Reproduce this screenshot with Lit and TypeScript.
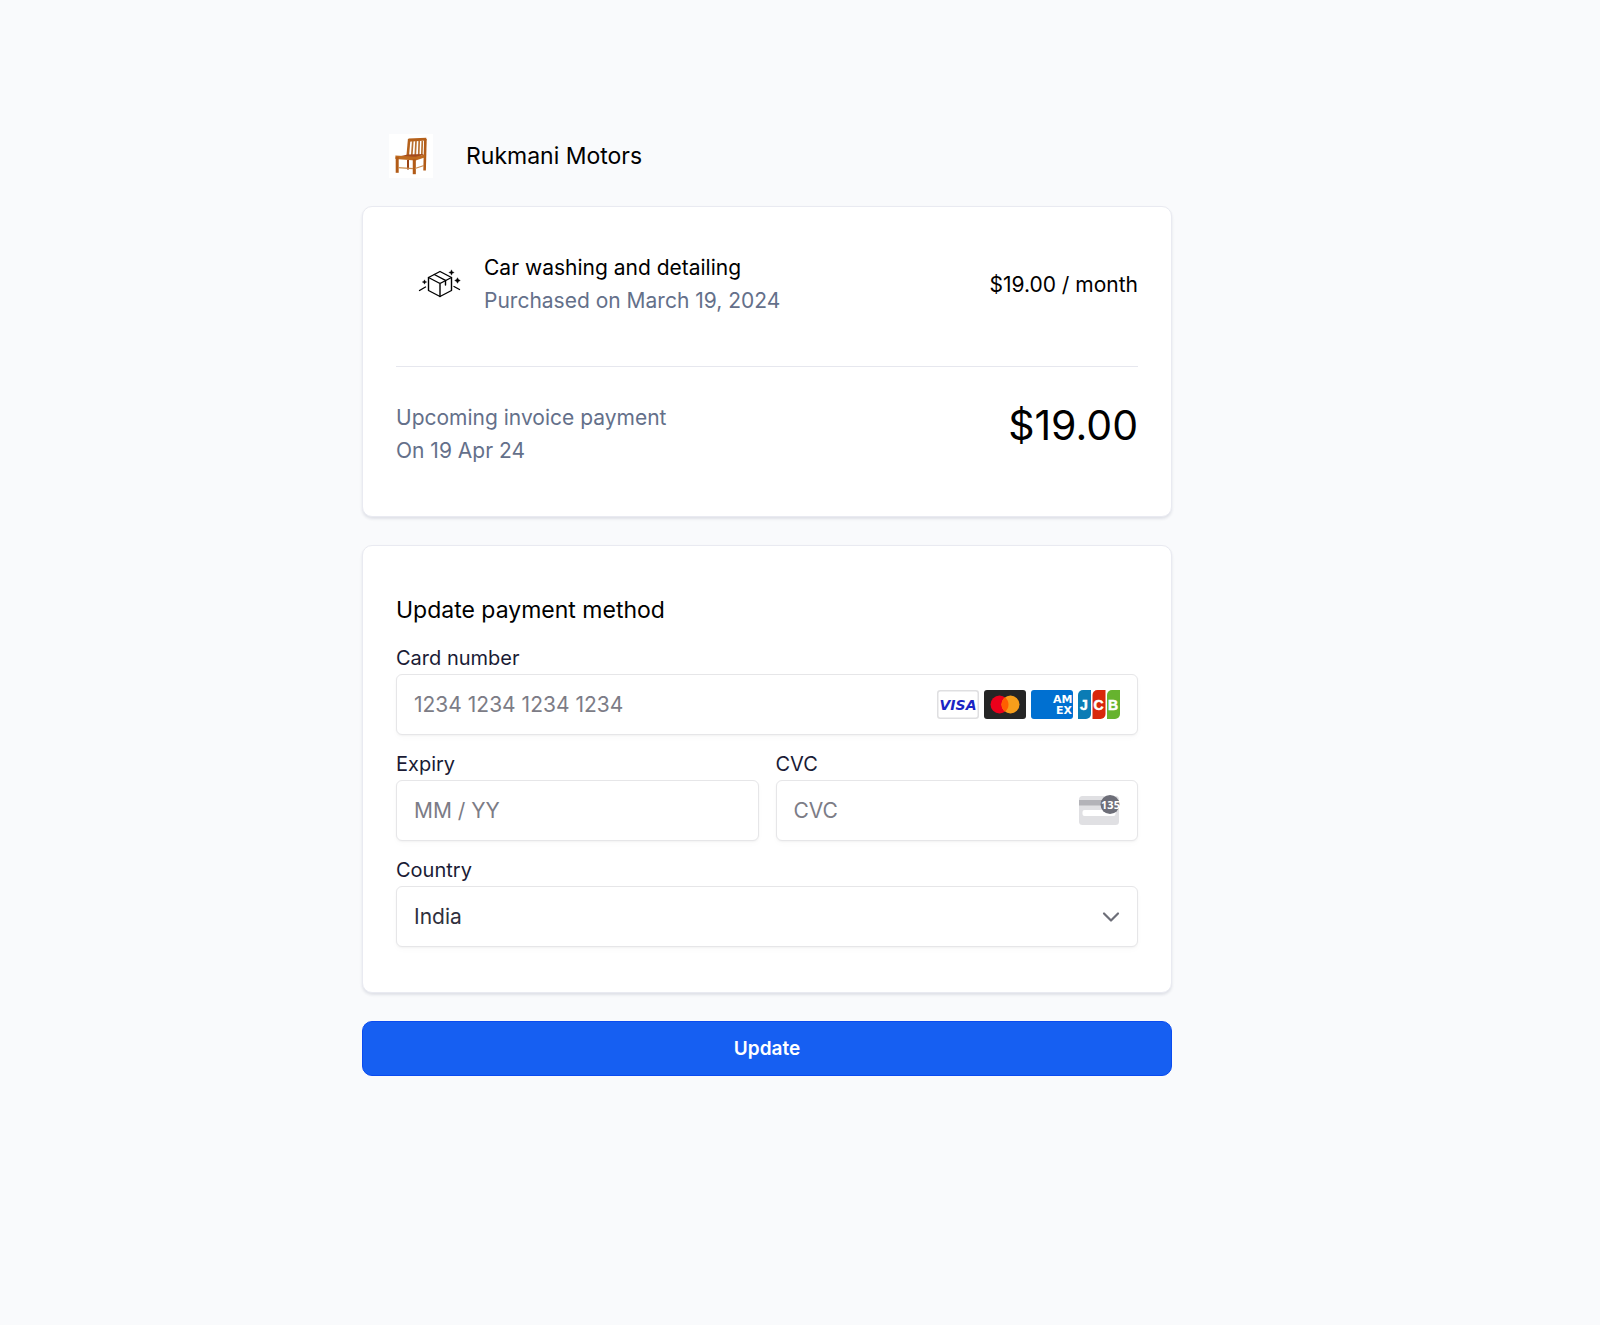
import { LitElement, html, css, svg } from "lit";
import { customElement } from "lit/decorators.js";

const chair = html`
  <svg class="logo" viewBox="0 0 44 44" role="img" aria-label="Wooden chair">
    <rect width="44" height="44" fill="#fff" />
    <path d="M19.5 4.6 L37.3 3.8 L37.4 6.6 L19.3 7.8 Z" fill="#b5611b" />
    <path d="M20.2 5 L18.8 21" stroke="#b5611b" stroke-width="2.6" />
    <path d="M36.4 5 L35.6 36.5" stroke="#b25b17" stroke-width="2.6" />
    <path d="M23.8 7 L22.8 21 M27 7 L26.3 21 M30.2 7 L29.7 21 M33.3 7 L32.8 21" stroke="#b8702f" stroke-width="1.7" />
    <path d="M18.6 20.4 L35 20 L26.5 24.8 L6.6 23.2 Z" fill="#a34a1c" />
    <path d="M6.4 21.4 L26.5 22.8 L35.6 20.5 L35.6 23.6 L26.6 26.6 L6.4 25 Z" fill="#bf6a1f" />
    <path d="M8.2 23 V38.8" stroke="#b25b17" stroke-width="3" />
    <path d="M25.3 25 V40.2" stroke="#b25b17" stroke-width="3.1" />
    <path d="M19 26 V35.5" stroke="#9a4315" stroke-width="2" />
    <path d="M9 33.6 L24 34.6 M26 34.5 L35 31.5" stroke="#c98a4e" stroke-width="1.2" />
  </svg>
`;

const parcel = html`
  <svg class="parcel" viewBox="0 0 44 30" aria-hidden="true">
    <g fill="none" stroke="#000" stroke-width="1.4" stroke-linejoin="round" stroke-linecap="round">
      <path d="M22 2.5 L33.5 8.5 V21.5 L22 27.5 L10.5 21.5 V8.5 Z" />
      <path d="M10.5 8.5 L22 14.5 L33.5 8.5 M22 14.5 V27.5" />
      <path d="M16.3 5.5 L27.5 11.4 V16" />
      <path d="M1.5 21.5 L7.5 18 M36 17.5 L41.5 20.5" />
    </g>
    <path d="M33.5 .8 l.8 1.9 1.9 .8 -1.9 .8 -.8 1.9 -.8 -1.9 -1.9 -.8 1.9 -.8z M6.5 10.8 l.7 1.5 1.5 .7 -1.5 .7 -.7 1.5 -.7 -1.5 -1.5 -.7 1.5 -.7z M39.5 8.7 l1 1.8 1.8 1 -1.8 1 -1 1.8 -1 -1.8 -1.8 -1 1.8 -1z" stroke="#000" stroke-width=".4" />
  </svg>
`;

const brands = [
  {
    name: "Visa",
    art: svg`
      <rect x=".75" y=".75" width="40.5" height="27.5" rx="2.5" fill="#fff" stroke="#dfdfe1" stroke-width="1.5" />
      <text x="21" y="20" text-anchor="middle" font-family="DejaVu Sans, sans-serif" font-size="14" font-weight="700" font-style="italic" fill="#1a25c4">VISA</text>`,
  },
  {
    name: "Mastercard",
    art: svg`
      <rect width="42" height="29" rx="3" fill="#252525" />
      <circle cx="15.5" cy="14.5" r="9" fill="#eb001b" />
      <circle cx="26.5" cy="14.5" r="9" fill="#f79e1b" />
      <path d="M21 7.37 a9 9 0 0 1 0 14.26 a9 9 0 0 1 0 -14.26z" fill="#ff5f00" />`,
  },
  {
    name: "American Express",
    art: svg`
      <rect width="42" height="29" rx="3" fill="#0070d1" />
      <g font-family="DejaVu Sans, sans-serif" font-size="11" font-weight="700" fill="#fff">
        <text x="22" y="13">AM</text>
        <text x="25" y="24">EX</text>
      </g>`,
  },
  {
    name: "JCB",
    art: svg`
      <path d="M5 0 H13 V24 a5 5 0 0 1 -5 5 H0 V5 a5 5 0 0 1 5 -5z" fill="#0b7cb5" />
      <path d="M19.5 0 H27.5 V24 a5 5 0 0 1 -5 5 H14.5 V5 a5 5 0 0 1 5 -5z" fill="#d8270b" />
      <path d="M34 0 H42 V24 a5 5 0 0 1 -5 5 H29 V5 a5 5 0 0 1 5 -5z" fill="#66b32e" />
      <g font-family="Liberation Sans, Arial, sans-serif" font-size="14" font-weight="700" fill="#fff" stroke="#fff" stroke-width=".5" text-anchor="middle">
        <text x="6" y="19.5">J</text>
        <text x="20.5" y="19.5">C</text>
        <text x="35" y="19.5">B</text>
      </g>`,
  },
];

const cvcHint = html`
  <svg class="cvc-hint" viewBox="0 0 42 32" aria-hidden="true">
    <rect x="1" y="1" width="40" height="29" rx="3.5" fill="#e0e0e3" />
    <rect x="1" y="5" width="40" height="5.5" fill="#b3b3b8" />
    <rect x="4.5" y="15" width="33" height="6" rx="2" fill="#fff" />
    <circle cx="32" cy="9.500" r="9.5" fill="#6d6e78" />
    <text x="32.5" y="13.5" text-anchor="middle" font-family="Open Sans, sans-serif" font-size="11" font-weight="700" fill="#fff">135</text>
  </svg>
`;

@customElement("app-root")
export class AppRoot extends LitElement {
  static styles = css`
    :host {
      display: block;
      min-height: 100vh;
      box-sizing: border-box;
      padding: 134px 66px 64px 0;
      background: #f9fafc;
      color: #000;
      font-family: Inter, "Liberation Sans", sans-serif;
      font-size: 21px;
      line-height: 33px;
    }
    * {
      box-sizing: border-box;
    }
    h1,
    h2,
    p {
      margin: 0;
      font-weight: 400;
    }
    svg {
      display: block;
      flex: none;
    }
    .page {
      max-width: 810px;
      margin: 0 auto;
    }
    .merchant {
      display: flex;
      align-items: center;
      gap: 33px;
      padding-left: 27px;
      margin-bottom: 28px;
    }
    .logo {
      width: 44px;
      height: 44px;
    }
    .merchant h1,
    .payment h2 {
      font-size: 23px;
      line-height: 33px;
    }
    .card {
      padding: 44px 33px;
      margin-bottom: 28px;
      border: 1px solid #e9eaf1;
      border-radius: 10px;
      background: #fff;
      box-shadow: 0 2px 3px rgba(20, 24, 60, 0.11);
    }
    .item {
      display: flex;
      align-items: center;
      padding: 0 0 49px 22px;
      border-bottom: 1px solid #e6e7ee;
    }
    .parcel {
      width: 44px;
      height: 30px;
    }
    .item-text {
      flex: 1;
      padding-left: 22px;
    }
    .muted {
      color: #64708a;
    }
    .upcoming {
      display: flex;
      justify-content: space-between;
      padding-top: 34px;
      padding-bottom: 5px;
    }
    .total {
      font-size: 41px;
      line-height: 49px;
    }
    .payment {
      padding-top: 48px;
      padding-bottom: 45px;
    }
    .payment h2 {
      padding-bottom: 19px;
    }
    .fields {
      display: grid;
      grid-template-columns: repeat(2, minmax(0, 1fr));
      gap: 17px;
    }
    .field {
      display: flex;
      flex-direction: column;
    }
    .wide {
      grid-column: 1 / -1;
    }
    label {
      padding-bottom: 4px;
      font-size: 20px;
      line-height: 24px;
      color: #1a1b35;
    }
    .box {
      display: flex;
      align-items: center;
      height: 61px;
      padding-right: 17px;
      border: 1px solid #e6e6e8;
      border-radius: 6px;
      background: #fff;
      box-shadow: 0 1px 2px rgba(0, 0, 0, 0.04), 0 3px 6px rgba(0, 0, 0, 0.02);
    }
    input,
    select {
      flex: 1;
      min-width: 0;
      height: 100%;
      padding: 0 0 0 17px;
      border: 0;
      background: none;
      outline: none;
      appearance: none;
      font: inherit;
      color: #30313d;
    }
    input::placeholder {
      color: #7c7c86;
      opacity: 1;
    }
    .brands {
      display: flex;
      gap: 5px;
    }
    .brand {
      width: 42px;
      height: 29px;
    }
    .cvc-hint {
      width: 42px;
      height: 32px;
    }
    .chevron {
      width: 18px;
      height: 12px;
    }
    button {
      display: block;
      width: 100%;
      height: 55px;
      padding: 0;
      border: 1px solid #0a4bf0;
      border-radius: 10px;
      background: #165ff2;
      color: #fff;
      font: 600 19px/24px Inter, "Liberation Sans", sans-serif;
    }
  `;

  render() {
    return html`
      <main class="page">
        <header class="merchant">
          ${chair}
          <h1>Rukmani Motors</h1>
        </header>

        <section class="card">
          <div class="item">
            ${parcel}
            <div class="item-text">
              <p>Car washing and detailing</p>
              <p class="muted">Purchased on March 19, 2024</p>
            </div>
            <p>$19.00 / month</p>
          </div>
          <div class="upcoming">
            <div class="muted">
              <p>Upcoming invoice payment</p>
              <p>On 19 Apr 24</p>
            </div>
            <p class="total">$19.00</p>
          </div>
        </section>

        <form @submit=${(e: Event) => e.preventDefault()}>
          <section class="card payment">
            <h2>Update payment method</h2>
            <div class="fields">
              <div class="field wide">
                <label for="number">Card number</label>
                <div class="box">
                  <input id="number" inputmode="numeric" placeholder="1234 1234 1234 1234" />
                  <div class="brands">
                    ${brands.map(
                      (b) => html`<svg class="brand" viewBox="0 0 42 29" role="img" aria-label=${b.name}>${b.art}</svg>`
                    )}
                  </div>
                </div>
              </div>
              <div class="field">
                <label for="expiry">Expiry</label>
                <div class="box">
                  <input id="expiry" inputmode="numeric" placeholder="MM / YY" />
                </div>
              </div>
              <div class="field">
                <label for="cvc">CVC</label>
                <div class="box">
                  <input id="cvc" inputmode="numeric" placeholder="CVC" />
                  ${cvcHint}
                </div>
              </div>
              <div class="field wide">
                <label for="country">Country</label>
                <div class="box">
                  <select id="country">
                    <option>India</option>
                  </select>
                  <svg class="chevron" viewBox="0 0 18 12" aria-hidden="true">
                    <path d="M2 2.5 L9 9.5 L16 2.5" fill="none" stroke="#6d6e78" stroke-width="2.2" stroke-linecap="round" stroke-linejoin="round" />
                  </svg>
                </div>
              </div>
            </div>
          </section>
          <button type="submit">Update</button>
        </form>
      </main>
    `;
  }
}
